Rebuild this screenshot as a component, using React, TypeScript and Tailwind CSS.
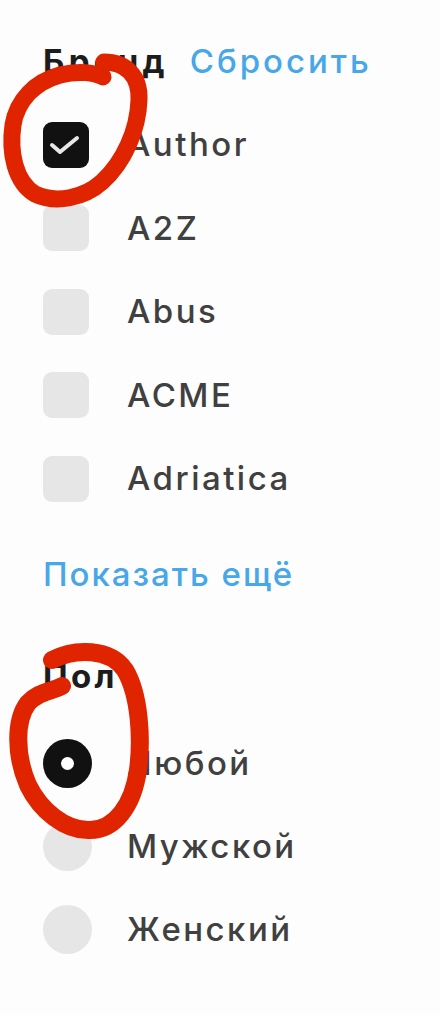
import React from "react";

const brands = ["Author", "A2Z", "Abus", "ACME", "Adriatica"];
const genders = ["Любой", "Мужской", "Женский"];

function Checkbox({ checked }: { checked: boolean }) {
  return (
    <div
      className={
        "w-[46px] h-[46px] rounded-[9px] flex items-center justify-center shrink-0 " +
        (checked ? "bg-[#111111]" : "bg-[#e6e6e6]")
      }
    >
      {checked && (
        <svg width="46" height="46" viewBox="0 0 46 46">
          <path
            d="M9 23 L17 30 L34 16"
            fill="none"
            stroke="#e8e8e8"
            strokeWidth="4"
            strokeLinecap="round"
            strokeLinejoin="round"
          />
        </svg>
      )}
    </div>
  );
}

function Radio({ checked }: { checked: boolean }) {
  return (
    <div
      className={
        "w-[49px] h-[49px] rounded-full flex items-center justify-center shrink-0 " +
        (checked ? "bg-[#111111]" : "bg-[#e6e6e6]")
      }
    >
      {checked && <div className="w-[13px] h-[13px] rounded-full bg-white" />}
    </div>
  );
}

export default function App() {
  return (
    <div
      className="relative w-[440px] h-[1015px] overflow-hidden bg-[#fdfdfd] pl-[43px] pt-[20px]"
      style={{ fontFamily: "Inter, 'Noto Sans', sans-serif" }}
    >
      <div className="flex flex-col">
        <div className="h-[83px] flex items-center gap-[21px] leading-none">
          <span className="text-[33px] font-bold text-[#1c1c1c] tracking-[0.13em]">Бренд</span>
          <span className="text-[33px] font-medium text-[#47a7e8] tracking-[0.09em]">Сбросить</span>
        </div>

        {brands.map((b, i) => (
          <div key={b} className="h-[83.5px] flex items-center gap-[38px]">
            <Checkbox checked={i === 0} />
            <span className="text-[33px] font-medium leading-none text-[#404040] tracking-[0.075em]">{b}</span>
          </div>
        ))}

        <div className="h-[107px] flex items-center">
          <span className="text-[33px] font-medium leading-none text-[#47a7e8] tracking-[0.06em]">Показать ещё</span>
        </div>

        <div className="mt-[4px] h-[90px] flex items-center">
          <span className="text-[33px] leading-none font-bold text-[#1c1c1c] tracking-[0.1em]">Пол</span>
        </div>

        {genders.map((g, i) => (
          <div key={g} className="h-[83px] flex items-center gap-[35px]">
            <Radio checked={i === 0} />
            <span className="text-[33px] font-medium leading-none text-[#404040] tracking-[0.075em]">{g}</span>
          </div>
        ))}
      </div>

      <svg
        className="absolute left-0 top-0 pointer-events-none"
        width="440"
        height="1015"
        viewBox="0 0 440 1015"
      >
        <path
          d="M104 62 C125 62 140 75 139 100 C138 130 124 162 102 182 C84 198 56 204 35 194 C15 182 9 152 13 125 C17 100 35 82 60 75 C80 70 95 73 103 77"
          fill="none"
          stroke="#e02400"
          strokeWidth="17"
          strokeLinecap="round"
          strokeLinejoin="round"
        />
        <path
          d="M52 660 C75 648 110 648 125 670 C140 695 142 740 138 770 C133 805 115 830 90 830 C65 831 40 810 28 785 C15 755 15 720 28 703 C38 692 50 692 62 686"
          fill="none"
          stroke="#e02400"
          strokeWidth="18"
          strokeLinecap="round"
          strokeLinejoin="round"
        />
      </svg>
    </div>
  );
}
